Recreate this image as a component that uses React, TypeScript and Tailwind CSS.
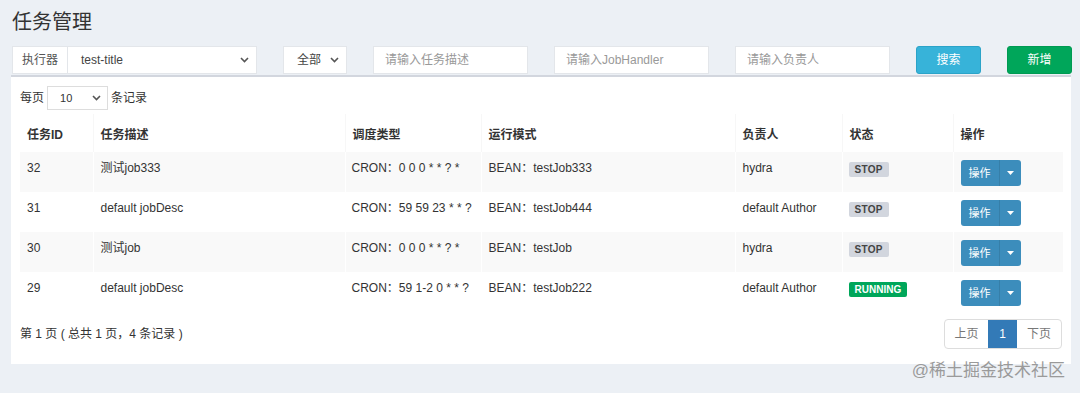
import React from 'react';

const font = { fontFamily: '"Liberation Sans", "Noto Sans CJK SC", sans-serif' };

// small down chevron used by the select boxes
const Chevron = () => (
  <svg width="9" height="6" viewBox="0 0 9 6" fill="none" stroke="#555" strokeWidth="1.6">
    <path d="M1 1l3.5 3.5L8 1" />
  </svg>
);

const jobs = [
  { id: 32, desc: '测试job333', cron: 'CRON：0 0 0 * * ? *', mode: 'BEAN：testJob333', author: 'hydra', running: false },
  { id: 31, desc: 'default jobDesc', cron: 'CRON：59 59 23 * * ?', mode: 'BEAN：testJob444', author: 'default Author', running: false },
  { id: 30, desc: '测试job', cron: 'CRON：0 0 0 * * ? *', mode: 'BEAN：testJob', author: 'hydra', running: false },
  { id: 29, desc: 'default jobDesc', cron: 'CRON：59 1-2 0 * * ?', mode: 'BEAN：testJob222', author: 'default Author', running: true },
];

const headers = ['任务ID', '任务描述', '调度类型', '运行模式', '负责人', '状态', '操作'];

const JobManage = () => {
  return (
    <div className="relative h-[393px] overflow-hidden bg-[#ecf0f5] text-[#333]" style={font}>
      {/* Title */}
      <h1 className="pt-[10px] pl-[12px] text-[20px] leading-[24px] text-[#333]">任务管理</h1>

      {/* Filter bar */}
      <div className="mt-[12px] ml-[12px] flex h-[28px] gap-[26px] text-[12px]">
        <div className="flex w-[245px] border border-[#e3e6ea] bg-white">
          <div className="flex w-[55px] items-center justify-center border-r border-[#e3e6ea] text-[#555]">执行器</div>
          <div className="flex flex-1 items-center justify-between pl-[13px] pr-[7px] text-[#444]">
            <span>test-title</span>
            <Chevron />
          </div>
        </div>
        <div className="flex w-[64px] items-center justify-between border border-[#e3e6ea] bg-white pl-[13px] pr-[7px] text-[#444]">
          <span>全部</span>
          <Chevron />
        </div>
        <input
          className="w-[155px] border border-[#e3e6ea] bg-white px-[11px] outline-none placeholder:text-[#999]"
          placeholder="请输入任务描述"
        />
        <input
          className="w-[155px] border border-[#e3e6ea] bg-white px-[11px] outline-none placeholder:text-[#999]"
          placeholder="请输入JobHandler"
        />
        <input
          className="w-[155px] border border-[#e3e6ea] bg-white px-[11px] outline-none placeholder:text-[#999]"
          placeholder="请输入负责人"
        />
        <button className="w-[65px] rounded-[3px] border border-[#2ba3c8] bg-[#37b3d9] text-white">搜索</button>
        <button className="w-[65px] rounded-[3px] border border-[#009a52] bg-[#00a65a] text-white">新增</button>
      </div>

      {/* Main box */}
      <div className="mt-[1px] ml-[11px] w-[1060px] border-t-2 border-[#d2d6de] bg-white px-[9px] pt-[9px] pb-[15px] text-[12px]">
        <div className="flex h-[24px] items-center gap-[3px] text-[#333]">
          <span>每页</span>
          <div className="flex h-[24px] w-[61px] items-center justify-between border border-[#ddd] pl-[12px] pr-[6px]">
            <span className="text-[11px]">10</span>
            <Chevron />
          </div>
          <span>条记录</span>
        </div>

        <table className="mt-[4px] w-full table-fixed border-collapse">
          <colgroup>
            <col className="w-[73px]" />
            <col className="w-[252px]" />
            <col className="w-[136px]" />
            <col className="w-[254px]" />
            <col className="w-[107px]" />
            <col className="w-[111px]" />
            <col className="w-[110px]" />
          </colgroup>
          <thead>
            <tr>
              {headers.map((h, i) => (
                <th
                  key={h}
                  className={`pt-[12px] pb-[8px] pl-[7px] text-left leading-[18px] font-bold ${i > 0 ? 'border-l border-[#f7f7f7]' : ''}`}
                >
                  {h}
                </th>
              ))}
            </tr>
          </thead>
          <tbody>
            {jobs.map((job, idx) => (
              <tr key={job.id} className={idx % 2 === 0 ? 'bg-[#f9f9f9]' : 'bg-white'}>
                <td className="h-[40px] pt-[8px] pl-[7px] align-top leading-[17px]">{job.id}</td>
                <td className="border-l border-white pt-[8px] pl-[7px] align-top leading-[17px]">{job.desc}</td>
                <td className="border-l border-white pt-[8px] pl-[6px] align-top leading-[17px]">{job.cron}</td>
                <td className="border-l border-white pt-[8px] pl-[7px] align-top leading-[17px]">{job.mode}</td>
                <td className="border-l border-white pt-[8px] pl-[7px] align-top leading-[17px]">{job.author}</td>
                <td className="border-l border-white pt-[10px] pl-[6px] align-top">
                  {job.running ? (
                    <span className="block w-fit rounded-[2px] bg-[#00a65a] px-[6px] text-[10px] leading-[15px] font-bold text-white">
                      RUNNING
                    </span>
                  ) : (
                    <span className="block w-fit rounded-[2px] bg-[#d2d6de] px-[6px] text-[10px] leading-[15px] font-bold tracking-[0.3px] text-[#444]">
                      STOP
                    </span>
                  )}
                </td>
                <td className="border-l border-white pt-[8px] pl-[7px] align-top">
                  <div className="flex h-[26px] w-[60px] rounded-[3px] bg-[#3c8dbc] text-white">
                    <span className="flex w-[38px] items-center justify-center text-[11px]">操作</span>
                    <span className="flex flex-1 items-center justify-center border-l border-[#367fa9]">
                      <svg width="7" height="4" viewBox="0 0 7 4" fill="#fff">
                        <path d="M0 0h7L3.5 4z" />
                      </svg>
                    </span>
                  </div>
                </td>
              </tr>
            ))}
          </tbody>
        </table>

        {/* Footer */}
        <div className="mt-[7px] flex items-center justify-between">
          <span className="text-[#333]">第 1 页 ( 总共 1 页，4 条记录 )</span>
          <div className="flex h-[30px] overflow-hidden rounded-[4px] border border-[#ddd]">
            <span className="flex w-[43px] items-center justify-center text-[#777]">上页</span>
            <span className="flex w-[29px] items-center justify-center bg-[#337ab7] text-white">1</span>
            <span className="flex w-[44px] items-center justify-center text-[#777]">下页</span>
          </div>
        </div>
      </div>

      {/* Watermark */}
      <div className="absolute right-[15px] bottom-[12px] text-[17px] leading-[20px] text-[#9a9a9a]">@稀土掘金技术社区</div>
    </div>
  );
};

export default JobManage;
